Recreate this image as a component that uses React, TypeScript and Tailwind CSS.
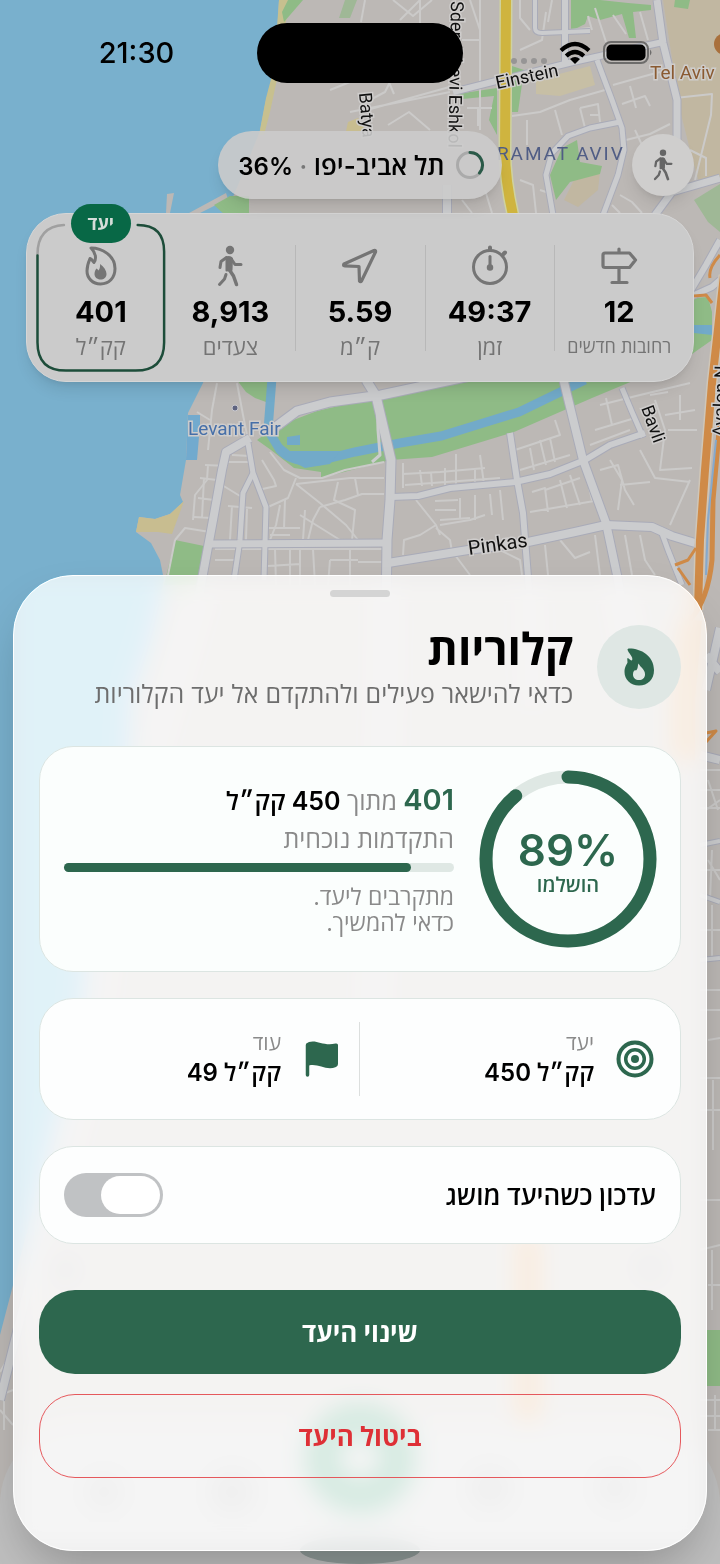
import { useState } from "react";
import type { ReactNode } from "react";

const majorRoads = [
  { d: "M250 438L226 452L222 470L213 520L200 590L150 760L110 900L90 1060L40 1240L0 1400", w: 8 },
  { d: "M270 431L297 411L330 402L381 395L470 376", w: 9 },
  { d: "M366 380L376 396L384 430L391 460L390 500L387 540L385 700L370 1100", w: 9 },
  { d: "M391 497L418 496L450 488L515 482L550 474L585 460L610 445L645 433", w: 6 },
  { d: "M563 378L583 460L606 523L617 575L640 700", w: 8 },
  { d: "M510 433L517 480L523 513L529 590L532 700", w: 6 },
  { d: "M388 563L468 550L528 542L575 532L606 525L652 527L672 536L695 543", w: 8 },
  { d: "M207 544L386 543", w: 7 },
  { d: "M248 443L253 473L266 507L264 580", w: 5 },
  { d: "M253 473L243 493L240 540L234 580", w: 5 },
  { d: "M622 388L632 412L643 437", w: 5 },
  { d: "M660 528L668 550L682 585", w: 5 },
  { d: "M453 92L500 80L573 62L627 50L663 42", w: 6 },
  { d: "M657 0L663 43L677 100L677 140", w: 7 },
  { d: "M597 60L612 100L622 128L624 150L618 175L603 215", w: 5 },
  { d: "M620 122L590 128L568 136L552 153L546 175L553 215", w: 5 },
  { d: "M447 185V215", w: 8 },
  { d: "M565 0V62", w: 6 },
  { d: "M535 0V28Q535 33 542 33L590 31", w: 4 },
  { d: "M655 215L672 192L720 178", w: 7 },
  { d: "M690 297L712 287L720 280M690 292L706 265L720 240", w: 6 },
  { d: "M720 628L706 690M706 655L720 672M700 755L720 760", w: 8 },
  { d: "M700 845L720 841M700 895L720 902M700 960L720 958", w: 4 },
];

const minorRoads = [
  "M392 66L360 78L330 90M367 110L453 86M350 112L450 92",
  "M365 0L361 22M393 0L413 16L432 0M400 20L420 0M420 0V25",
  "M470 0L480 30V70M480 0V130M462 40H480M462 55L440 62",
  "M388 125L409 112L430 130M467 108H492M478 108V126",
  "M392 78L385 92L370 100M388 80L394 94",
  "M520 0V18L530 30M546 12L542 40L520 50",
  "M552 0L548 22M570 30L590 28",
  "M595 8L606 42M613 15L626 34M640 12L648 40M588 16L592 30",
  "M512 116L540 112L570 100L605 90M527 120V145M555 110L562 135",
  "M580 108L598 104L600 122M580 108L586 132M590 115H600",
  "M613 85L645 76L660 72M630 86L636 108M622 104L645 96L650 106",
  "M626 140L650 134L670 124M635 130L642 145",
  "M675 98L712 94L711 115L695 180M690 150L706 158V176",
  "M520 180L533 185L536 213M540 190L552 194",
  "M485 190L492 213M462 200L472 213",
  "M620 195L632 202L642 213M612 205L620 213",
  "M217 383L212 410L208 450M237 383L243 415L248 440",
  "M197 412L210 420M205 465L228 466M208 465L207 480L195 495L193 520",
  "M200 478L217 480M198 498L214 500M194 517L212 518M204 478L202 518",
  "M175 540L185 528L210 532M175 540L168 575",
  "M232 455L250 456M228 462L252 462M222 485L240 496",
  "M262 460L274 480L276 486L258 490L256 476",
  "M270 452L284 470L300 478L322 478L345 470L384 462",
  "M296 478L288 498L268 507M296 484L320 503L346 525L358 540",
  "M296 484L350 478L384 478M320 507L345 500L362 494L384 494",
  "M305 510L303 540M320 507L313 520L308 540M300 515L340 540",
  "M338 482L334 500L355 510L352 540M355 478L358 495",
  "M228 506L252 508M232 506L230 540M247 508L246 540M280 505L276 525L270 540",
  "M268 528H300M270 535H290M285 500L284 528",
  "M215 549H386M215 560H240M275 549L276 585M290 549V585M300 549V585M313 549L315 585M330 560H358M350 549V585M358 562H385M268 566L300 564M330 560L328 585",
  "M403 463V488M403 474L440 472L485 468M420 470L422 486M431 472L432 486M445 468V488M456 454V486M475 470V486M480 455L484 484M405 485L500 478",
  "M416 500L436 525L440 535M436 525L420 535L404 540L403 555M440 525L470 520L485 515M436 528L450 540L452 552",
  "M435 501L458 500M435 510L456 510M440 520L470 518M460 498V518M475 495V520M490 494L492 515M500 490L503 520",
  "M515 450L560 435L555 420M520 470L570 455M530 448L534 470M540 440L546 465M550 438L555 462",
  "M530 512L600 500M532 492L545 488L548 512M560 480L567 508M545 490L580 478M570 475L580 505M585 470L592 500",
  "M600 405L640 395L690 383M595 430L635 418M590 445L630 430M606 398L612 425",
  "M600 470L618 465L625 490L634 505M610 460L622 480L618 510M640 450L655 478L690 482M620 485L650 482",
  "M655 400L665 430L660 470L692 468M665 415L695 410M668 430L697 430M650 395L668 392M680 395V420M690 480L670 525",
  "M455 555L470 575M500 550L520 560L522 575M545 545L548 575M560 540L575 558L590 552M595 535L600 575M625 535L632 575M640 535L645 560L655 575",
  "M708 780L718 810M706 810L720 800M708 860L720 880M712 850L710 900",
  "M700 770H720M700 790H720M700 808H720M700 870H720M700 930H720M712 905V960",
  "M700 990H720M700 1010H720M708 1040L720 1038M700 1078H720M700 1110H720M713 1080V1150",
  "M700 1200H720M700 1250L720 1245M712 1250V1310M708 1285H720",
  "M700 1400H720M700 1416H720M715 1395V1430M708 1430H720",
  "M0 1372L13 1350M0 1395L13 1390M0 1410L13 1425M4 1380V1430",
];

const greens = [
  "M275 427L317 411L381 396L468 378L640 378L592 398L514 432L432 457L390 460L321 478V472L294 468L271 450L257 440Z",
  "M237 380H269L266 402L255 398L246 392Z",
  "M175 540L204 546L200 585L164 585Z",
  "M571 0H600L628 3L651 5V10L633 12L636 38H629L622 14L600 20L588 16L585 24L571 31Z",
  "M675 0H690L688 9L674 7Z",
  "M562 148L577 140L580 162L602 166L600 174L570 182L556 200L550 175Z",
  "M512 66L524 70L518 112H512Z",
  "M457 94L497 88V135L489 120L494 96L462 99Z",
  "M214 205L230 196H249V216H226Z",
  "M288 0H303L284 22L282 12Z",
  "M694 298L708 297L712 312V340L692 354Z",
  "M706 1330H720V1386H706Z",
];

type MapLabelProps = {
  x: number;
  y: number;
  rotate?: number;
  size?: number;
  fill?: string;
  children: ReactNode;
};

function MapLabel({ x, y, rotate = 0, size = 19, fill = "#111111", children }: MapLabelProps) {
  return (
    <text
      x={x}
      y={y}
      fontSize={size}
      fill={fill}
      stroke="#cfcdcc"
      strokeWidth={3}
      paintOrder="stroke"
      transform={`rotate(${rotate} ${x} ${y})`}
    >
      {children}
    </text>
  );
}

function MapBackground() {
  return (
    <svg
      className="absolute inset-0 size-full font-[Roboto,sans-serif]"
      viewBox="0 0 720 1564"
      preserveAspectRatio="xMidYMin slice"
      direction="ltr"
      aria-hidden="true"
    >
      <rect width="720" height="1564" fill="#bcb8b5" />
      {/* university campus */}
      <path d="M663 0H720V180L700 186L690 150L680 110Z" fill="#c1b7a1" />
      <path d="M536 80L590 66L595 85L560 96L536 94Z" fill="#c7bfa5" />
      <path d="M575 178L600 172L598 190L578 207L564 200Z" fill="#c1b7a1" />
      <path d="M348 122L358 118L366 131H346Z" fill="#c8bd90" />
      {/* sea and beach */}
      <path
        d="M0 0H279L275 70L266 100L260 131L238 185L226 213L214 350L203 383L188 413L186 460L180 495L183 502L170 514L155 519L139 517L136 532L151 543L160 560L164 580L150 640L130 700L125 800L90 900L76 1050L55 1120L30 1220L0 1335Z"
        fill="#79b0cd"
      />
      <path d="M279 0H291L284 30L279 70L270 112L264 135H259L266 98L274 68Z" fill="#c7c08f" />
      <path d="M184 501L170 514L155 519L139 517L136 532L158 532L172 534Z" fill="#c8bd90" />
      <path d="M188 415H200V425L197 460H186Z" fill="#72aace" />
      <path d="M189 213L226 193L228 199L200 213M166 213L167 194L174 193L170 213Z" fill="#bcb8b5" />
      {greens.map((d) => (
        <path key={d} d={d} fill="#8fbb86" />
      ))}
      <path d="M345 0H357L350 18H339ZM720 184L694 200L708 222L720 232Z" fill="#9fb896" />
      {/* Yarkon river */}
      <path
        d="M272 378L268 430L280 450Q292 463 318 461L355 452L400 443L441 436L480 424L519 412L585 380"
        fill="none"
        stroke="#72aac9"
        strokeWidth="9"
      />
      <path d="M276 440L290 451L340 451L330 464L305 468L286 458ZM287 437L300 435V445H287ZM694 325H712V335L694 333Z" fill="#72aac9" />
      <g fill="none" stroke="#cbcac9" strokeWidth="2" strokeLinejoin="round">
        {minorRoads.map((d) => (
          <path key={d} d={d} />
        ))}
      </g>
      <g fill="none" strokeLinejoin="round">
        {majorRoads.map((road) => (
          <path key={road.d} d={road.d} stroke="#a9abb8" strokeWidth={road.w + 2} />
        ))}
        {majorRoads.map((road) => (
          <path key={road.d} d={road.d} stroke="#cbccce" strokeWidth={road.w} />
        ))}
        <path d="M377 396L378 430L380 455L372 462" stroke="#cbccce" strokeWidth="3" />
        {/* highways */}
        <path d="M506 0L505 150Q505 180 513 215" stroke="#cfd2a0" strokeWidth="13" />
        <path d="M506 0L505 150Q505 180 513 215" stroke="#cfb43f" strokeWidth="10" />
        <path d="M724 275L712 383L705 470L700 540L698 610" stroke="#cfc6b8" strokeWidth="11" />
        <path d="M724 275L712 383L705 470L700 540L698 610" stroke="#cf8a47" strokeWidth="8" />
        <path d="M692 620L685 700V760M528 1235V1420" stroke="#cf9a67" strokeWidth="20" />
        <path d="M720 420L713 500L712 560Q708 600 690 620" stroke="#cf8a47" strokeWidth="5" />
        <path d="M716 440L708 520L706 575" stroke="#86a9cc" strokeWidth="2" />
        <path d="M675 565L688 560L696 548M678 568L690 585M720 255Q708 268 710 278M694 296L706 295L712 303M706 733L716 731L706 742" stroke="#cf8a47" strokeWidth="3" />
      </g>
      <circle cx="235" cy="408" r="3" fill="#5f6480" stroke="#c9c9cf" />
      <circle cx="725" cy="44" r="11" fill="#a9703c" />
      <MapLabel x={188} y={435} size={19} fill="#466fa8">Levant Fair</MapLabel>
      <MapLabel x={469} y={555} rotate={-8} size={20}>Pinkas</MapLabel>
      <MapLabel x={641} y={408} rotate={70} size={18}>Bavli</MapLabel>
      <MapLabel x={497} y={89} rotate={-12} size={18}>Einstein</MapLabel>
      <MapLabel x={359} y={93} rotate={85} size={18}>Batya</MapLabel>
      <MapLabel x={451} y={1} rotate={91} size={18}>Sderot Levi Eshkol</MapLabel>
      <MapLabel x={650} y={79} size={19} fill="#8a5a31">Tel Aviv</MapLabel>
      <MapLabel x={725} y={437} rotate={-88} size={18}>Ayalon N</MapLabel>
      <text x="497" y="160" fontSize="19" fill="#505d85" className="tracking-widest">RAMAT AVIV</text>
      {/* tab bar below the sheet */}
      <rect x="0" y="1424" width="720" height="220" rx="80" fill="#bfbfbf" />
      <circle cx="360" cy="1458" r="38" fill="none" stroke="#4f9175" strokeWidth="34" />
      <g fill="#a9a9a9">
        <circle cx="104" cy="1492" r="17" />
        <circle cx="232" cy="1492" r="22" />
        <circle cx="490" cy="1488" r="20" />
        <circle cx="615" cy="1488" r="18" />
        <circle cx="65" cy="1270" r="14" />
        <circle cx="650" cy="1268" r="16" />
      </g>
      <ellipse cx="360" cy="1550" rx="60" ry="14" fill="#8f9a98" />
    </svg>
  );
}

function FlameIcon() {
  return (
    <svg width="32" height="40" viewBox="0 0 32 40" aria-hidden="true">
      <path
        d="M6 2C17 2 30 9.500 30 22.500C30 32 24 38 15.500 38C7.500 38 2 32 2 25C2 20 3.500 16 5 12.500C7 13 7.500 15 9 16.500C11.500 13 11 7 6 2Z"
        fill="none"
        stroke="currentColor"
        strokeWidth="3"
        strokeLinejoin="round"
      />
      <path
        d="M15 18C19 21 21.500 24.500 21.500 28C21.500 31.500 19 33.500 15.500 33.500C12 33.500 9.500 31 9.500 28C9.500 25.500 10.500 23.500 11.500 22.500C12.500 23 13 24 13.500 24.500C15 22.500 15.300 20 15 18Z"
        fill="currentColor"
      />
    </svg>
  );
}

function SolidFlameIcon() {
  return (
    <svg width="32" height="40" viewBox="0 0 32 40" aria-hidden="true">
      <path
        fillRule="evenodd"
        fill="currentColor"
        d="M6.500 1.500C18 1.500 31 9 31 23C31 32.500 25 38.500 16 38.500C7.500 38.500 1.500 32.500 1.500 25C1.500 20 3.500 18 4.500 15.500C4.500 13.500 4 12.500 4.500 11C6 11.500 7.500 13.500 9 13.500C11 10 5 6 4.500 2.500C4.500 1.800 5.500 1.500 6.500 1.500ZM15.500 16.500C14.500 18 15.500 21.500 13 23.500C11.500 22.500 10 24.500 10 27.500C10 31 12.500 33 16 33C19.500 33 22 31 22 27.500C22 22.500 18.500 21.500 15.500 16.500Z"
      />
    </svg>
  );
}

function WalkIcon({ className = "" }: { className?: string }) {
  return (
    <svg width="28" height="42" viewBox="0 0 28 42" className={className} aria-hidden="true">
      <circle cx="14" cy="5" r="4.200" fill="currentColor" />
      <path d="M10.500 12.500Q14 11 16 13.500L15.500 25L10.500 25.500Z" fill="currentColor" stroke="currentColor" strokeWidth="2" strokeLinejoin="round" />
      <g fill="none" stroke="currentColor" strokeWidth="3" strokeLinecap="round" strokeLinejoin="round">
        <path d="M15 13.500L19 19.500H25" />
        <path d="M10.500 12.500L5 16.500L4 22.500" />
        <path d="M13.500 25L17.500 31L20.500 39.500" strokeWidth="3.500" />
        <path d="M10 29.500L8.500 34L3.500 39.500" />
      </g>
    </svg>
  );
}

function ArrowIcon() {
  return (
    <svg width="38" height="38" viewBox="0 0 38 38" aria-hidden="true">
      <path d="M33 3.500L3 17Q2 18.500 3.500 18.800L18 19.500L18.500 34Q19.500 35.500 20.500 34L34.500 5Q35 3 33 3.500Z" fill="none" stroke="currentColor" strokeWidth="3.200" strokeLinejoin="round" />
    </svg>
  );
}

function StopwatchIcon() {
  return (
    <svg width="40" height="42" viewBox="0 0 40 42" aria-hidden="true" fill="none" stroke="currentColor" strokeWidth="3" strokeLinecap="round">
      <circle cx="20" cy="22" r="16.500" />
      <path d="M20 2.500V5M33.500 9L35 7.500" strokeWidth="4" />
      <path d="M20 11.500V22" />
      <circle cx="20" cy="22.500" r="2" fill="currentColor" strokeWidth="2.500" />
    </svg>
  );
}

function SignpostIcon() {
  return (
    <svg width="38" height="40" viewBox="0 0 38 40" aria-hidden="true" fill="none" stroke="currentColor" strokeWidth="3.200" strokeLinecap="round" strokeLinejoin="round">
      <path d="M19 3V7M5 7H29.500L35.500 14L29.500 21.500H5Q3 21.500 3 19.500V9Q3 7 5 7ZM19 22V36M12 36.500H27" />
    </svg>
  );
}

function TargetIcon() {
  return (
    <svg width="38" height="38" viewBox="0 0 38 38" aria-hidden="true" fill="none" stroke="currentColor" strokeWidth="4">
      <circle cx="19" cy="19" r="16.500" />
      <circle cx="19" cy="19" r="9.300" strokeWidth="3.500" />
      <circle cx="19" cy="19" r="4" fill="currentColor" stroke="none" />
    </svg>
  );
}

function FlagIcon() {
  return (
    <svg width="36" height="38" viewBox="0 0 36 38" aria-hidden="true">
      <path d="M3.500 35V5" stroke="currentColor" strokeWidth="3.500" strokeLinecap="round" />
      <path d="M2 5Q2 3 5 2C13 -0.500 20 6.500 31.500 3.500Q34 3 34 5V24Q34 26 32 27C22 31 14 23 5 25.500L2 26.500Z" fill="currentColor" />
    </svg>
  );
}

const stats = [
  { value: "12", label: "רחובות חדשים", icon: <SignpostIcon />, small: true },
  { value: "49:37", label: "זמן", icon: <StopwatchIcon /> },
  { value: "5.59", label: "ק״מ", icon: <ArrowIcon /> },
  { value: "8,913", label: "צעדים", icon: <WalkIcon /> },
  { value: "401", label: "קק״ל", icon: <FlameIcon />, goal: true },
];

function StatusBar() {
  return (
    <div dir="ltr" className="grid grid-cols-[1fr_auto_1fr] items-center pt-[23px]">
      <span className="pl-4 text-center text-[29px] leading-8 font-medium">21:30</span>
      <div className="h-[60px] w-[206px] rounded-full bg-black" />
      <div className="flex items-center justify-end pr-[66px]">
        <div className="mt-4 mr-3 flex gap-1">
          <i className="size-1.5 rounded-sm bg-[#969595]" />
          <i className="size-1.5 rounded-sm bg-[#969595]" />
          <i className="size-1.5 rounded-sm bg-[#969595]" />
          <i className="size-1.5 rounded-sm bg-[#969595]" />
        </div>
        <svg width="32" height="24" viewBox="0 0 32 24" fill="none" stroke="#000" strokeWidth="4.200" aria-hidden="true">
          <path d="M2 9.500Q16 -3.500 30 9.500" />
          <path d="M7.200 15Q16 7 24.800 15" />
          <path d="M16 23L11 18Q16 14 21 18Z" fill="#000" stroke="none" />
        </svg>
        <svg className="ml-3" width="51" height="24" viewBox="0 0 51 24" aria-hidden="true">
          <rect x="1" y="1" width="44" height="21" rx="7" fill="none" stroke="#6d6c6b" strokeWidth="2" />
          <rect x="3.500" y="3.500" width="39" height="16" rx="5" fill="#000" />
          <path d="M47 8.500Q50 11.500 47 14.500Z" fill="#6d6c6b" />
        </svg>
      </div>
    </div>
  );
}

function GoalOutline() {
  return (
    <svg className="absolute inset-0 size-full" viewBox="0 0 130 151" fill="none" strokeWidth="2.500" strokeLinecap="round" preserveAspectRatio="none" aria-hidden="true">
      <path d="M28 2C10 3 1.500 14 1.500 32" stroke="#a0a0a0" />
      <path d="M102 2C120 2 128.500 11 128.500 29V121C128.500 140 119 149.500 100 149.500H30C11 149.500 1.500 140 1.500 121V33" stroke="#1d4d3a" />
    </svg>
  );
}

function StatsCard() {
  return (
    <section className="mx-[26px] mt-[14px] grid grid-cols-5 rounded-[40px] border border-[#d6d6d6] bg-[#cbcbcb] px-[9px] py-[9px] shadow-lg">
      {stats.map((stat, i) => (
        <div key={stat.value} className="relative flex h-[149px] flex-col items-center pt-[22px]">
          {stat.goal && (
            <>
              <GoalOutline />
              <span className="absolute -top-[19px] left-1/2 flex h-[39px] w-[60px] -translate-x-1/2 items-center justify-center rounded-full bg-[#086846] text-[18px] font-bold text-[#d5ddd9]">
                יעד
              </span>
            </>
          )}
          {i < 3 && <span className="absolute top-[22px] left-0 h-[106px] w-px bg-[#b8b8b8]" />}
          <span className="flex h-[42px] items-center text-[#757575]">{stat.icon}</span>
          <span className="mt-[7px] text-[29px] leading-9 font-bold">{stat.value}</span>
          <span
            className={
              stat.small
                ? "text-[18px] leading-[34px] whitespace-nowrap text-[#747474]"
                : "text-[22px] leading-[34px] whitespace-nowrap text-[#747474]"
            }
          >
            {stat.label}
          </span>
        </div>
      ))}
    </section>
  );
}

function ProgressRing({ percent }: { percent: number }) {
  return (
    <div className="relative size-[178px] shrink-0">
      <svg viewBox="0 0 178 178" className="size-full -rotate-90" fill="none" strokeWidth="13" aria-hidden="true">
        <circle cx="89" cy="89" r="82" stroke="#dfe8e4" />
        <circle
          cx="89"
          cy="89"
          r="82"
          stroke="#2d674e"
          strokeLinecap="round"
          pathLength={100}
          strokeDasharray={`${percent} 100`}
        />
      </svg>
      <div className="absolute inset-0 flex flex-col items-center justify-center pt-[6px] text-[#2d674e]">
        <span className="text-[44px] leading-[46px] font-semibold">{percent}%</span>
        <span className="text-[20px] leading-6 font-semibold">הושלמו</span>
      </div>
    </div>
  );
}

function GoalFact({ icon, label, value }: { icon: ReactNode; label: string; value: string }) {
  return (
    <div className="flex items-center gap-[22px]">
      <span className="flex w-[38px] justify-center text-[#2d674e]">{icon}</span>
      <div>
        <p className="text-[21px] leading-7 text-[#8a8a8a]">{label}</p>
        <p className="text-[24px] leading-8 font-semibold">{value}</p>
      </div>
    </div>
  );
}

export default function App() {
  const [notify, setNotify] = useState(false);
  const percent = 89;

  return (
    <main
      dir="rtl"
      className="relative overflow-hidden bg-[#bcb8b5] pb-[13px] font-[Inter,'Open_Sans','Liberation_Sans',sans-serif] text-black"
    >
      <MapBackground />
      <div className="relative">
        <StatusBar />

        <div className="mx-[26px] mt-12 grid grid-cols-[1fr_auto_1fr] items-center">
          <button
            type="button"
            aria-label="הליכה"
            className="flex size-[62px] items-center justify-center rounded-full bg-[#cfcecd] text-[#666] shadow-lg"
          >
            <WalkIcon className="h-8 w-6" />
          </button>
          <div className="flex h-[68px] items-center gap-2.5 rounded-full bg-[#cbcbcb]/90 pr-[17px] pl-5 shadow-lg">
            <svg width="30" height="30" viewBox="0 0 30 30" fill="none" strokeWidth="3" aria-hidden="true">
              <circle cx="15" cy="15" r="12.500" stroke="#aaaaaa" />
              <path d="M15 2.500A12.500 12.500 0 0 1 24.500 23" stroke="#2a5a48" strokeLinecap="round" />
            </svg>
            <span className="text-[26px] font-semibold whitespace-nowrap">
              תל אביב-יפו <span className="text-[24px] text-[#777]">·</span>{" "}
              <span className="text-[24px]">36%</span>
            </span>
          </div>
        </div>

        <StatsCard />

        <section
          role="dialog"
          aria-labelledby="goal-title"
          className="mx-[13px] mt-[193px] rounded-[60px] border border-white bg-[#f6f6f6]/80 px-[25px] pb-[72px] shadow-2xl backdrop-blur-md backdrop-brightness-125 backdrop-saturate-125"
        >
          <div className="mx-auto mt-[14px] h-[7px] w-[60px] rounded-full bg-[#d4d4d4]" />

          <header className="mt-[25px] flex items-center gap-6">
            <span className="flex size-[84px] items-center justify-center rounded-full bg-[#dfe7e4] text-[#2d674e]">
              <SolidFlameIcon />
            </span>
            <div>
              <h1 id="goal-title" className="text-[44px] leading-[54px] font-bold">קלוריות</h1>
              <p className="text-[25px] leading-9 whitespace-nowrap text-[#6d6d6d]">
                כדאי להישאר פעילים ולהתקדם אל יעד הקלוריות
              </p>
            </div>
          </header>

          <div className="mt-[34px] flex items-center gap-[25px] rounded-[34px] border border-[#dce5e2] bg-[#fbfefd] py-[23px] pr-[23px] pl-6">
            <ProgressRing percent={percent} />
            <div className="flex-1">
              <p className="text-[25px] leading-9 font-semibold">
                <span className="text-[29px] text-[#2d674e]">401</span>{" "}
                <span className="font-normal text-[#8a8a8a]">מתוך</span> 450 קק״ל
              </p>
              <p className="mt-1 text-[25px] leading-8 text-[#8a8a8a]">התקדמות נוכחית</p>
              <div dir="ltr" className="mt-2 h-[9px] rounded-full bg-[#dfe8e4]">
                <div className="h-full rounded-full bg-[#2d674e]" style={{ width: `${percent}%` }} />
              </div>
              <p className="mt-3 text-[23px] leading-[26px] text-[#8a8a8a]">
                מתקרבים ליעד.
                <br />
                כדאי להמשיך.
              </p>
            </div>
          </div>

          <div className="mt-[26px] grid h-[122px] grid-cols-2 items-center rounded-[34px] border border-[#dce5e2] bg-[#fdfefe] px-[26px]">
            <GoalFact icon={<TargetIcon />} label="יעד" value="קק״ל 450" />
            <div className="flex h-[74px] items-center border-r border-[#dcdfde] pr-[18px]">
              <GoalFact icon={<FlagIcon />} label="עוד" value="קק״ל 49" />
            </div>
          </div>

          <label className="mt-[26px] flex h-[98px] items-center justify-between rounded-[34px] border border-[#dce5e2] bg-[#fdfefe] px-6">
            <span className="text-[26px] font-semibold">עדכון כשהיעד מושג</span>
            <input
              type="checkbox"
              role="switch"
              checked={notify}
              onChange={(e) => setNotify(e.target.checked)}
              className="flex h-11 w-[99px] appearance-none items-center rounded-full bg-[#c0c2c4] px-[3px] before:h-[38px] before:w-[59px] before:rounded-full before:bg-white checked:justify-end checked:bg-[#2d674e]"
            />
          </label>

          <button
            type="button"
            className="mt-[46px] h-[84px] w-full rounded-[36px] bg-[#2d674e] text-[26px] font-bold text-white"
          >
            שינוי היעד
          </button>
          <button
            type="button"
            className="mt-5 h-[84px] w-full rounded-[36px] border border-[#e5585c] text-[26px] font-bold text-[#de3036]"
          >
            ביטול היעד
          </button>
        </section>
      </div>
    </main>
  );
}
